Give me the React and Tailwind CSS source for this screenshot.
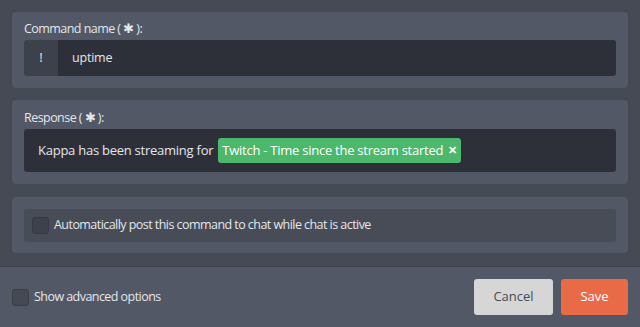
export default function App() {
  const font = { fontFamily: '"Open Sans", sans-serif' };
  return (
    <div className="w-[640px] h-[327px] bg-[#464a55] text-[#e4e6ea] flex flex-col text-[13px]" style={font}>
      <div className="flex flex-col gap-3 px-3 pt-3 h-[266px]">
        <div className="bg-[#525866] rounded-[4px] px-3 pt-[8px] pb-3">
          <div className="leading-[18px] mb-[2px] text-[12.5px] tracking-[-0.55px]">Command name ( ✱ ):</div>
          <div className="flex h-9 rounded-[3px] overflow-hidden">
            <div className="w-[34px] bg-[#3d414b] flex items-center justify-center">!</div>
            <div className="flex-1 bg-[#2e3039] flex items-center px-[14px] text-[12.5px] tracking-[-0.2px]">uptime</div>
          </div>
        </div>

        <div className="bg-[#525866] rounded-[4px] px-3 pt-[9px] pb-3">
          <div className="leading-[18px] mb-[2px] text-[12.5px] tracking-[-0.55px]">Response ( ✱ ):</div>
          <div className="flex items-center h-[43px] bg-[#2e3039] rounded-[3px] pl-[14px] tracking-[-0.25px]">
            <span>Kappa has been streaming for</span>
            <span className="ml-[5px] flex items-center h-[25px] px-[4px] bg-[#4cb86c] rounded-[3px] text-white">
              Twitch - Time since the stream started
              <span className="ml-[5px] text-[11px] font-bold">✕</span>
            </span>
          </div>
        </div>

        <div className="bg-[#525866] rounded-[4px] px-3 pt-3 pb-[11px] mt-px">
          <div className="flex items-center h-[33px] bg-[#474c57] rounded-[3px] px-2 gap-[5px] text-[12.5px] tracking-[-0.55px]">
            <span className="w-[17px] h-[17px] rounded-[3px] bg-[#3d414b] border border-[#363943]"></span>
            <span>Automatically post this command to chat while chat is active</span>
          </div>
        </div>
      </div>

      <div className="flex-1 bg-[#525865] border-t border-[#3e424c] flex items-center justify-between px-3">
        <div className="flex items-center gap-[5px] text-[12.5px] tracking-[-0.55px]">
          <span className="w-[17px] h-[17px] rounded-[3px] bg-[#454953] border border-[#3b3e47]"></span>
          <span>Show advanced options</span>
        </div>
        <div className="flex gap-2">
          <button className="w-[79px] h-9 rounded-[3px] bg-[#d6d6d6] text-[#474b54]">Cancel</button>
          <button className="w-[67px] h-9 rounded-[3px] bg-[#e86a47] text-white">Save</button>
        </div>
      </div>
    </div>
  );
}
